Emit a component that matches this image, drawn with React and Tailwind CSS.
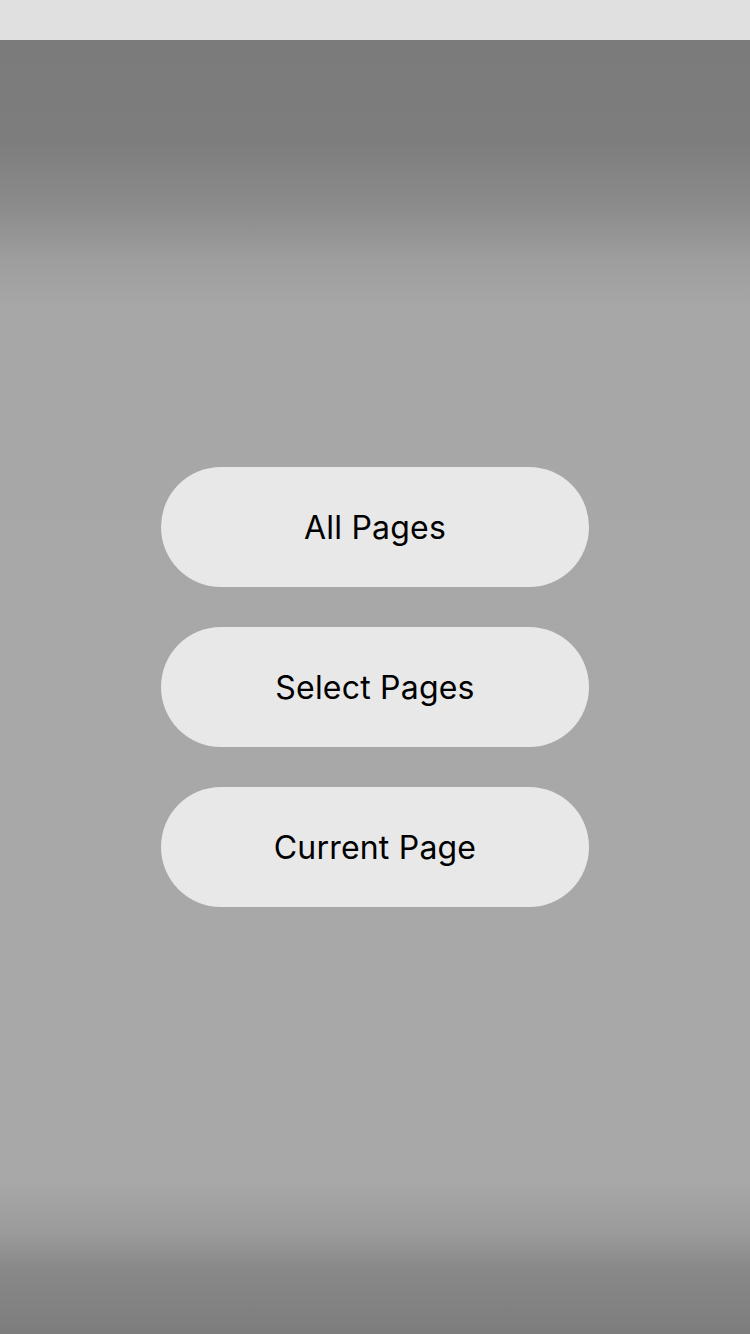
export default function App() {
  const items = ["All Pages", "Select Pages", "Current Page"];
  return (
    <div className="flex h-[1334px] w-[750px] flex-col overflow-hidden font-['Inter','Noto_Sans',sans-serif]">
      <div className="h-[40px] shrink-0 bg-[#e0e0e0]" />
      <div className="flex flex-1 flex-col items-center justify-center gap-[40px] bg-[linear-gradient(to_bottom,#7b7b7b_0px,#7d7d7d_100px,#8c8c8c_170px,#9e9e9e_220px,#a7a7a7_270px,#a8a8a8_700px,#a8a8a8_1140px,#9c9c9c_1190px,#888888_1230px,#7d7d7d_1294px)]">
        {items.map((t) => (
          <button
            key={t}
            className="flex h-[120px] w-[428px] items-center justify-center rounded-full bg-[#e8e8e8] pt-[2px] text-[32px] leading-none tracking-[0.2px] text-black"
          >
            {t}
          </button>
        ))}
      </div>
    </div>
  );
}
